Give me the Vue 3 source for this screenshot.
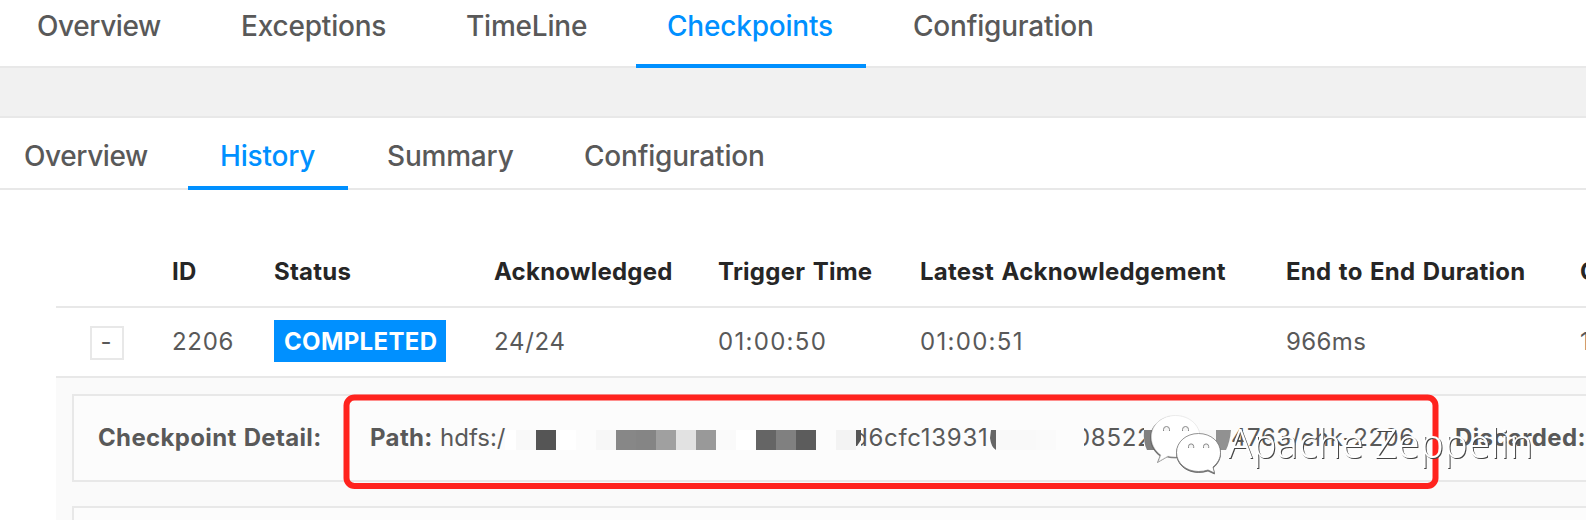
<script setup>
const topTabs = ['Overview', 'Exceptions', 'TimeLine', 'Checkpoints', 'Configuration']
const subTabs = ['Overview', 'History', 'Summary', 'Configuration']
const heads = ['ID', 'Status', 'Acknowledged', 'Trigger Time', 'Latest Acknowledgement', 'End to End Duration', 'C']
const blocks = [
  [505, 11, '#ffffff'], [516, 20, '#f9f9f9'], [536, 20, '#555555'], [556, 20, '#ffffff'], [576, 20, '#fcfcfc'],
  [596, 20, '#f7f7f7'], [616, 20, '#878787'], [636, 20, '#858585'], [656, 20, '#a0a0a0'],
  [676, 20, '#e2e2e2'], [696, 20, '#999999'], [716, 20, '#fafafa'], [736, 20, '#ffffff'],
  [756, 20, '#656565'], [776, 20, '#808080'], [796, 20, '#5c5c5c'], [816, 20, '#fcfcfc'],
  [836, 20, '#f3f3f3'], [996, 40, '#f9f9f9'], [1036, 20, '#fafafa'],
  [1156, 60, '#f8f8f8'],
]
</script>

<template>
  <main class="page">
    <nav class="tabs top">
      <span v-for="(t, i) in topTabs" :key="t" class="tab" :class="{ active: i === 3 }"><b>{{ t }}</b></span>
    </nav>
    <div class="band"></div>
    <nav class="tabs sub">
      <span v-for="(t, i) in subTabs" :key="t" class="tab" :class="{ active: i === 1 }"><b>{{ t }}</b></span>
    </nav>
    <section class="table">
      <div class="row head">
        <span></span>
        <span v-for="h in heads" :key="h">{{ h }}</span>
      </div>
      <div class="row body">
        <span class="toggle">-</span>
        <span class="num">2206</span>
        <span><em class="badge">COMPLETED</em></span>
        <span class="num">24/24</span>
        <span class="time">01:00:50</span>
        <span class="time">01:00:51</span>
        <span class="ms">966ms</span>
        <span>1</span>
      </div>
      <div class="expanded">
        <div class="detail">
          <b>Checkpoint Detail:</b>
          <b>Path:</b>
          <span>hdfs:/</span>
          <span class="hash one"><i>d6cfc13931</i></span>
          <span class="hash two"><i>08522</i></span>
          <span class="tail">4763/chk-2206</span>
          <b>Discarded:</b>
        </div>
        <div class="detail next"></div>
      </div>
    </section>
    <svg class="overlay" width="1586" height="520" viewBox="0 0 1586 520">
      <rect v-for="b in blocks" :key="b[0]" :x="b[0]" y="430" :width="b[1]" height="20" :fill="b[2]" />
      <path d="M856 430h5v10l-4 6h-1z" fill="#555" />
      <path d="M991 430h5v20q-5-3-6-12z" fill="#666" />
      <path d="M1144 430h12v20h-9q-4-8-3-20z" fill="#808080" />
      <path d="M1216 430h15q-1 12-5 20h-10z" fill="#919191" />
      <rect x="346.500" y="397.500" width="1089" height="88.500" rx="8" fill="none" stroke="#ff231e" stroke-width="6" />
    </svg>
    <svg class="overlay mark" width="1586" height="520" viewBox="0 0 1586 520">
      <path class="back" d="M1175.500 415.500c-13.500 0-24 9-24 21.500 0 8 4 14 9.500 18l-2.500 6.500 9.500-5.500q4 1 8.500 1c13 0 23.500-8 23.500-20s-11-21.500-24.500-21.500z" />
      <path class="front" d="M1198.500 433.500c-12.500 0-22 8.500-22 19s9.500 19 22 19q5 0 9.500-1.500l6.500 3-1.500-6c5-4 7.500-9 7.500-14.500 0-10.500-9.500-19-22-19z" />
      <g class="eyes">
        <path d="M1163.500 431v-1.500a3 3 0 0 1 6 0v1.500" /><path d="M1182.500 431v-1.500a3 3 0 0 1 6 0v1.500" />
        <path d="M1188.500 448v-1.500a2.600 2.600 0 0 1 5.200 0v1.500" /><path d="M1203.500 448v-1.500a2.600 2.600 0 0 1 5.200 0v1.500" />
      </g>
      <text x="1228" y="458" textLength="305">Apache Zeppelin</text>
    </svg>
  </main>
</template>

<style>
body { margin: 0; overflow: hidden; }
</style>

<style scoped>
.page { position: relative; width: 1586px; height: 520px; overflow: hidden; background: #fff; color: #595959; font-family: Inter, "Liberation Sans", sans-serif; font-size: 24px; display: flex; flex-direction: column; }
.tabs { display: grid; box-sizing: border-box; flex: none; border-bottom: 2px solid #e8e8e8; font-size: 28px; }
.top { height: 68px; grid-template-columns: 205px 225px 201px 246px 300px; padding-left: 5px; }
.top .tab { line-height: 53px; }
.sub { height: 72px; grid-template-columns: 188px 168px 197px 300px; }
.sub .tab { line-height: 76px; }
.tab { box-sizing: border-box; padding-left: 31px; white-space: nowrap; }
.tab:first-child { padding-left: 32px; }
.sub .tab:first-child { padding-left: 24px; }
.tab b { font-weight: 500; letter-spacing: -0.2px; }
.tab:first-child b { letter-spacing: -0.4px; }
.sub .active b { margin-left: 1px; }
.tab.active { color: #0090ff; border-bottom: 4px solid #0090ff; }
.top .active { width: 230px; height: 68px; }
.sub .active { width: 160px; height: 72px; }
.band { flex: none; height: 48px; background: #f1f1f1; border-bottom: 2px solid #e8e8e8; }
.table { margin-left: 56px; display: flex; flex-direction: column; width: 1530px; }
.row { display: grid; box-sizing: border-box; grid-template-columns: 116px 102px 220px 224px 202px 366px 294px 200px; border-bottom: 2px solid #e8e8e8; white-space: nowrap; overflow: hidden; }
.head { height: 118px; line-height: 164px; color: #262626; font-weight: 700; letter-spacing: 0.25px; word-spacing: 1.5px; }
.body { height: 70px; line-height: 68px; }
.num { letter-spacing: 0.7px; }
.time { letter-spacing: 1.3px; }
.ms { letter-spacing: 0.4px; }
.toggle { box-sizing: border-box; width: 34px; height: 34px; margin: 18px 0 0 34px; border: 2px solid #e8e8e8; line-height: 28px; text-align: center; text-indent: -2px; }
.badge { display: block; box-sizing: border-box; width: 172px; height: 42px; margin-top: 12px; padding-left: 10px; background: #0090ff; color: #fff; font-style: normal; font-weight: 700; letter-spacing: 0.35px; line-height: 43px; }
.expanded { background: #fafafa; height: 142px; padding: 16px 0 0 16px; display: flex; flex-direction: column; gap: 24px; box-sizing: border-box; }
.detail { flex: none; box-sizing: border-box; width: 1540px; height: 88px; border: 2px solid #e8e8e8; background: #fcfcfc; line-height: 84px; white-space: nowrap; display: grid; grid-template-columns: 272px 70px 421px 223px 147px 224px 200px; padding-left: 24px; }
.detail b { font-weight: 700; letter-spacing: 0.35px; word-spacing: 1px; }
.hash { overflow: hidden; }
.hash i { font-style: normal; letter-spacing: 0.7px; }
.one { width: 131px; }
.one i { margin-left: -8px; }
.two { width: 60px; }
.two i { margin-left: -9px; }
.tail { letter-spacing: 0.55px; }
.overlay { position: absolute; left: 0; top: 0; }
.mark path { fill: #fff; }
.mark .back { stroke: #ddd; stroke-width: 0.6; filter: drop-shadow(-0.5px 1px 0.5px #666); }
.mark .front { stroke: #777; stroke-width: 0.8; filter: drop-shadow(0 1px 0.5px #666); }
.mark text { fill: #fff; filter: drop-shadow(1px 1px 0 #444); font-family: "Noto Sans", sans-serif; font-size: 40px; font-weight: 300; }
.mark .eyes path { fill: #f6f6f6; stroke: #888; stroke-width: 1; }
</style>
